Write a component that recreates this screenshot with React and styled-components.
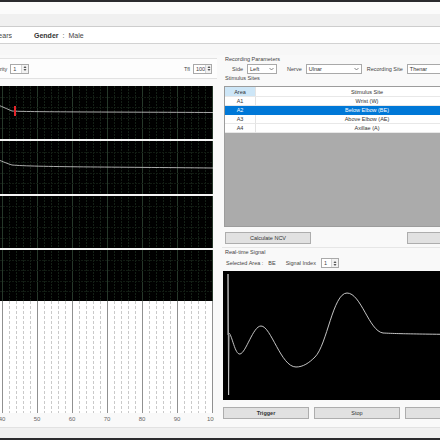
import styled, { createGlobalStyle } from 'styled-components'

const Global = createGlobalStyle`
  html, body {
    margin: 0;
    padding: 0;
    width: 440px;
    height: 440px;
    overflow: hidden;
    background: #f0f0f0;
  }
  body {
    font-family: "Liberation Sans", Arial, sans-serif;
    color: #2a2a2a;
  }
`;

const Window = styled.div`
  width: 560px;
  height: 440px;
  margin-left: -40px;
  display: flex;
  flex-direction: column;
  background: #f0f0f0;
`;

const Chrome = styled.div`
  height: 2px;
  background: #2b2b2e;
`;

const TitleBand = styled.div`
  height: 12px;
  background: #fbfbfb;
`;

const MenuBand = styled.div`
  height: 12px;
  background: #f0f0f0;
  border-bottom: 1px solid #cdcdcd;
`;

const InfoBar = styled.div`
  height: 16px;
  background: #ffffff;
  border-bottom: 1px solid #d2d2d2;
  display: flex;
  align-items: center;
  gap: 22px;
  font-size: 7px;
  color: #444;
`;

const AgeField = styled.div`
  width: 52px;
  text-align: right;
  white-space: nowrap;
  overflow: hidden;
`;

const Field = styled.div`
  display: flex;
  gap: 4px;
  white-space: nowrap;
`;

const FieldName = styled.b`
  font-weight: 700;
  color: #333;
`;

const Gap = styled.div`
  height: 11px;
  background: #f7f7f7;
`;

const Main = styled.div`
  height: 372px;
  display: grid;
  grid-template-columns: 257px 274px;
  column-gap: 5px;
  align-items: start;
  background: #f9f9f9;
  overflow: hidden;
`;

const LeftCol = styled.div`
  padding-left: 4px;
  display: flex;
  flex-direction: column;
`;

const ControlBox = styled.div`
  margin-top: 3px;
  height: 19px;
  border: 1px solid #e2e2e2;
  border-right: none;
  background: #fdfdfd;
  display: flex;
  align-items: center;
  padding: 0 5px 0 24px;
  font-size: 5.5px;
  color: #444;
`;

const Pair = styled.div`
  display: flex;
  align-items: center;
  gap: 3px;
  margin-left: ${p => (p.$push ? 'auto' : '0')};
`;

const SpinBox = styled.div`
  width: ${p => p.$w}px;
  height: 10px;
  box-sizing: border-box;
  border: 1px solid #a9a9a9;
  background: #fff;
  display: flex;
  align-items: center;
  justify-content: space-between;
  padding-left: 2px;
  font-size: 5.5px;
`;

const SpinArrows = styled.div`
  width: 6px;
  height: 8px;
  border-left: 1px solid #d6d6d6;
  background: #f2f2f2;
  display: flex;
  align-items: center;
  justify-content: center;
`;

const Spin = ({ value, width }) => (
  <SpinBox $w={width}>
    <span>{value}</span>
    <SpinArrows>
      <svg width="4" height="7" viewBox="0 0 4 7">
        <path d="M0.5 3 L2 1 L3.5 3 Z M0.5 4 L2 6 L3.5 4 Z" fill="#555" />
      </svg>
    </SpinArrows>
  </SpinBox>
);

const ChartSvg = styled.svg`
  display: block;
  margin-top: 7px;
`;

const RightCol = styled.div`
  display: flex;
  flex-direction: column;
  font-size: 5.5px;
  color: #333;
`;

const GroupLabel = styled.div`
  height: 7px;
  line-height: 7px;
  margin-top: 1px;
  padding-left: 3px;
  color: #444;
`;

const ParamRow = styled.div`
  margin-top: 1px;
  height: 10px;
  display: flex;
  align-items: center;
  padding-left: 10px;
  gap: 4px;
`;

const ParamLabel = styled.span`
  color: #444;
  margin-left: ${p => p.$gap || 0}px;
`;

const SelectBox = styled.div`
  width: ${p => p.$w}px;
  height: 10px;
  box-sizing: border-box;
  border: 1px solid #a9a9a9;
  background: #fff;
  display: flex;
  align-items: center;
  justify-content: space-between;
  padding: 0 2px;
`;

const Select = ({ value, width }) => (
  <SelectBox $w={width}>
    <span>{value}</span>
    <svg width="5" height="4" viewBox="0 0 5 4">
      <path d="M0.5 1 L2.5 3 L4.5 1" fill="none" stroke="#555" strokeWidth="0.7" />
    </svg>
  </SelectBox>
);

const TextBox = styled.div`
  width: ${p => p.$w}px;
  height: 10px;
  box-sizing: border-box;
  border: 1px solid #a9a9a9;
  background: #fff;
  display: flex;
  align-items: center;
  padding: 0 2px;
`;

const Table = styled.div`
  margin: 4px 0 0 2px;
  height: 141px;
  background: #ababab;
  border: 1px solid #9c9c9c;
  box-sizing: border-box;
`;

const Row = styled.div`
  display: grid;
  grid-template-columns: 31px 223px;
  height: ${p => (p.$head ? 10 : 9)}px;
  background: ${p => (p.$selected ? '#0078d7' : '#fff')};
  color: ${p => (p.$selected ? '#fff' : '#333')};
`;

const Cell = styled.div`
  display: flex;
  align-items: center;
  justify-content: center;
  border-right: 1px solid ${p => (p.$selected ? '#0078d7' : '#e3e3e3')};
  border-bottom: 1px solid ${p => (p.$selected ? '#0078d7' : '#e8e8e8')};
  background: ${p => (p.$accent ? '#cde6f7' : 'transparent')};
  white-space: nowrap;
`;

const ButtonRow = styled.div`
  display: flex;
  justify-content: ${p => (p.$spread ? 'space-between' : 'flex-start')};
  gap: 5px;
  margin-top: ${p => p.$top}px;
  padding-left: ${p => p.$left}px;
  width: ${p => p.$w}px;
`;

const Button = styled.div`
  width: 86px;
  height: 12px;
  box-sizing: border-box;
  border: 1px solid #adadad;
  background: #e1e1e1;
  display: flex;
  align-items: center;
  justify-content: center;
  font-size: 5.5px;
  font-weight: ${p => (p.$bold ? 700 : 400)};
  color: #333;
`;

const Divider = styled.div`
  margin-top: 3px;
  height: 1px;
  background: #e6e6e6;
`;

const SignalRow = styled.div`
  margin-top: 2px;
  height: 10px;
  display: flex;
  align-items: center;
  padding-left: 4px;
  gap: 5px;
  color: #444;
`;

const Scope = styled.svg`
  display: block;
  margin: 3px 0 0 1px;
  background: #000;
`;

// sweep chart on the left, x axis 30..100
const W = 250;
const majors = [3, 38, 73, 108, 143, 178, 213, 248];
const minors = [];
for (let x = 3; x < W; x += 7) minors.push(x);
const bands = [
  [0, 53],
  [55, 108],
  [110, 162],
  [164, 215],
];
const labels = ['30', '40', '50', '60', '70', '80', '90', '100'];

const SweepChart = () => (
  <ChartSvg width={W} height={340} viewBox={`0 0 ${W} 340`}>
    <rect x="0" y="0" width="249" height="215" fill="#000" />
    {minors.map(x => (
      <line key={'m' + x} x1={x + 0.5} y1="0" x2={x + 0.5} y2="215" stroke="#142016" strokeDasharray="2 1" />
    ))}
    {majors.map(x => (
      <line key={'M' + x} x1={x + 0.5} y1="0" x2={x + 0.5} y2="215" stroke="#26382a" />
    ))}
    {bands.map(([a, b]) =>
      [1, 2, 3, 4].map(i => {
        const y = Math.round(a + ((b - a) * i) / 5) + 0.5;
        return <line key={a + '-' + i} x1="0" y1={y} x2="249" y2={y} stroke="#111a12" strokeDasharray="2 1" />;
      })
    )}
    <rect x="0" y="53" width="249" height="2" fill="#f4f4f4" />
    <rect x="0" y="108" width="249" height="2" fill="#f4f4f4" />
    <rect x="0" y="162" width="249" height="2" fill="#f4f4f4" />
    <path d="M0,8 C20,12 34,19 48,25 C60,26 150,26 249,26.5" fill="none" stroke="#bdbdbd" strokeWidth="0.9" />
    <line x1="51" y1="20" x2="51" y2="30" stroke="#e4252b" strokeWidth="2" />
    <path d="M0,64 C24,68 38,76 48,79 C70,81 150,81 249,82" fill="none" stroke="#bdbdbd" strokeWidth="0.9" />
    <rect x="0" y="215" width="249" height="112" fill="#fff" />
    {minors.map(x => (
      <line key={'w' + x} x1={x + 0.5} y1="215" x2={x + 0.5} y2="327" stroke="#cacaca" strokeDasharray="3 2" />
    ))}
    {majors.map(x => (
      <line key={'W' + x} x1={x + 0.5} y1="215" x2={x + 0.5} y2="327" stroke="#909090" />
    ))}
    {labels.map((t, i) => (
      <text key={t} x={majors[i]} y="335" textAnchor="middle" fontSize="6" fill="#666" fontFamily="Liberation Sans, Arial, sans-serif">
        {t}
      </text>
    ))}
  </ChartSvg>
);

const sites = [
  ['A1', 'Wrist (W)'],
  ['A2', 'Below Elbow (BE)'],
  ['A3', 'Above Elbow (AE)'],
  ['A4', 'Axillae (A)'],
];

const Footer = styled.div`
  height: 10px;
  border-top: 1px solid #e2e2e2;
  background: #f0f0f0;
`;

export default function App() {
  return (
    <>
      <Global />
      <Window>
        <Chrome />
        <TitleBand />
        <MenuBand />
        <InfoBar>
          <AgeField>Age : 45 Years</AgeField>
          <Field>
            <FieldName>Gender</FieldName>
            <span>:</span>
            <span>Male</span>
          </Field>
        </InfoBar>
        <Gap />
        <Main>
          <LeftCol>
            <ControlBox>
              <Pair>
                <span>Polarity</span>
                <Spin value="1" width={19} />
              </Pair>
              <Pair $push>
                <span>Tfl</span>
                <Spin value="100" width={19} />
              </Pair>
            </ControlBox>
            <SweepChart />
          </LeftCol>
          <RightCol>
            <GroupLabel>Recording Parameters</GroupLabel>
            <ParamRow>
              <ParamLabel>Side</ParamLabel>
              <Select value="Left" width={30} />
              <ParamLabel $gap={6}>Nerve</ParamLabel>
              <Select value="Ulnar" width={56} />
              <ParamLabel $gap={1}>Recording Site</ParamLabel>
              <TextBox $w={70}>Thenar</TextBox>
            </ParamRow>
            <GroupLabel>Stimulus Sites</GroupLabel>
            <Table>
              <Row $head>
                <Cell $accent>Area</Cell>
                <Cell>Stimulus Site</Cell>
              </Row>
              {sites.map(([a, s]) => (
                <Row key={a} $selected={a === 'A2'}>
                  <Cell $selected={a === 'A2'}>{a}</Cell>
                  <Cell $selected={a === 'A2'}>{s}</Cell>
                </Row>
              ))}
            </Table>
            <ButtonRow $spread $top={5} $left={3} $w={268}>
              <Button>Calculate NCV</Button>
              <Button>Clear</Button>
            </ButtonRow>
            <Divider />
            <GroupLabel>Real-time Signal</GroupLabel>
            <SignalRow>
              <span>Selected Area :</span>
              <span>BE</span>
              <span style={{ marginLeft: 5 }}>Signal Index</span>
              <Spin value="1" width={18} />
            </SignalRow>
            <Scope width={270} height={129} viewBox="0 0 270 129">
              <path d="M5,64 L5,3 L5.6,124 L6,64" fill="none" stroke="#cfcfcf" strokeWidth="0.8" />
              <path
                d="M6,62 C9,64 12,84 17,83 C23,82 30,55 38,55 C48,55 58,96 73,96 C80,96 86,92 92,86 C104,74 110,22 124,22 C138,22 146,60 160,62 C180,63 200,63 270,64"
                fill="none"
                stroke="#d9d9d9"
                strokeWidth="0.9"
              />
            </Scope>
            <ButtonRow $top={7} $left={1} $w={274}>
              <Button $bold>Trigger</Button>
              <Button>Stop</Button>
              <Button>Export</Button>
            </ButtonRow>
          </RightCol>
        </Main>
        <Footer />
        <Chrome />
      </Window>
    </>
  );
}
